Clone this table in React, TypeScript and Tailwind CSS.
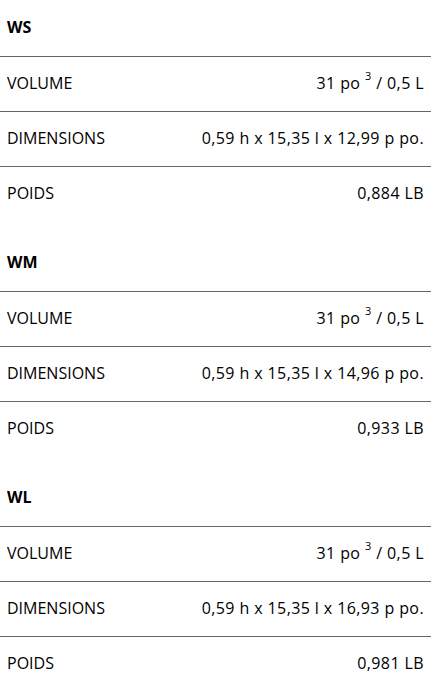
import React from "react";

type Spec = {
    label: string;
    value: React.ReactNode;
};

type Size = {
    name: string;
    specs: Spec[];
};

const volume = (
    <>31 po <sup className="text-[11px] align-[3px]">3</sup> / 0,5 L</>
);

const sizes: Size[] = [
    {
        name: "WS",
        specs: [
            {label: "VOLUME", value: volume},
            {label: "DIMENSIONS", value: "0,59 h x 15,35 l x 12,99 p po."},
            {label: "POIDS", value: "0,884 LB"},
        ],
    },
    {
        name: "WM",
        specs: [
            {label: "VOLUME", value: volume},
            {label: "DIMENSIONS", value: "0,59 h x 15,35 l x 14,96 p po."},
            {label: "POIDS", value: "0,933 LB"},
        ],
    },
    {
        name: "WL",
        specs: [
            {label: "VOLUME", value: volume},
            {label: "DIMENSIONS", value: "0,59 h x 15,35 l x 16,93 p po."},
            {label: "POIDS", value: "0,981 LB"},
        ],
    },
];

export default function App(): JSX.Element {
    return (
        <div className="w-[431px] bg-white text-black text-[16px] font-['Open_Sans',sans-serif]">
            {sizes.map((size, i) => (
                <div key={size.name} className={i > 0 ? "pt-[13px]" : ""}>
                    {/* Size heading */}
                    <div className="h-[57px] flex items-center px-[7px] pb-[3px] border-b border-[#666] font-bold">
                        {size.name}
                    </div>

                    {/* Specs */}
                    {size.specs.map((spec, j) => (
                        <div key={spec.label}
                             className={"h-[55px] flex items-center justify-between px-[7px] pb-[3px] " +
                                 (j < size.specs.length - 1 ? "border-b border-[#666]" : "")}>
                            <span>{spec.label}</span>
                            <span className="text-right tracking-[0.4px]">{spec.value}</span>
                        </div>
                    ))}
                </div>
            ))}
        </div>
    );
}
